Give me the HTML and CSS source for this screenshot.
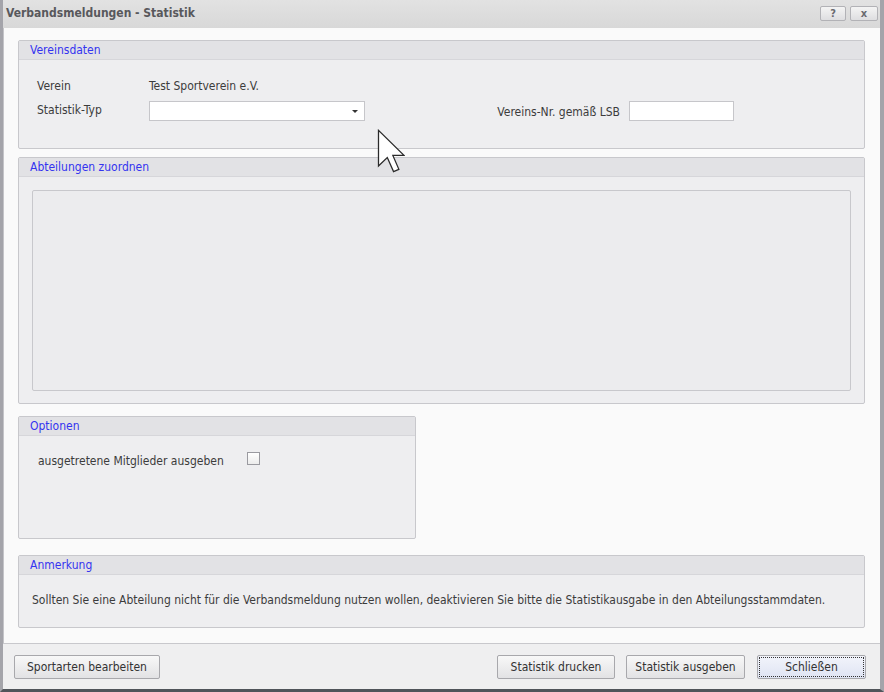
FILE: index.html
```html
<!DOCTYPE html>
<html lang="de">
  <head>
    <meta charset="UTF-8" />
    <title>Verbandsmeldungen - Statistik</title>
    <link rel="stylesheet" href="styles.css">
  </head>
  <body>
    <div class="window">
      <div class="titlebar">
        <span class="title">Verbandsmeldungen - Statistik</span>
        <div class="title-buttons">
          <span class="tbtn">?</span>
          <span class="tbtn tbtn-close">x</span>
        </div>
      </div>

      <div class="content">
        <div class="group group-verein">
          <div class="group-head">Vereinsdaten</div>
          <div class="group-body">
            <div class="row">
              <span class="lbl">Verein</span>
              <span>Test Sportverein e.V.</span>
            </div>
            <div class="row row-typ">
              <span class="lbl">Statistik-Typ</span>
              <div class="combo"><span class="caret"></span></div>
              <div class="lsb">
                <span class="lsb-lbl">Vereins-Nr. gemäß LSB</span>
                <div class="textbox"></div>
              </div>
            </div>
          </div>
        </div>

        <div class="group group-abt">
          <div class="group-head">Abteilungen zuordnen</div>
          <div class="group-body">
            <div class="listbox"></div>
          </div>
        </div>

        <div class="group group-opt">
          <div class="group-head">Optionen</div>
          <div class="group-body">
            <div class="row">
              <span class="lbl-opt">ausgetretene Mitglieder ausgeben</span>
              <span class="checkbox"></span>
            </div>
          </div>
        </div>

        <div class="group group-note">
          <div class="group-head">Anmerkung</div>
          <div class="group-body">
            Sollten Sie eine Abteilung nicht für die Verbandsmeldung nutzen wollen, deaktivieren Sie bitte die Statistikausgabe in den Abteilungsstammdaten.
          </div>
        </div>
      </div>

      <div class="footer">
        <button class="btn btn-sport">Sportarten bearbeiten</button>
        <div class="footer-right">
          <button class="btn btn-druck">Statistik drucken</button>
          <button class="btn btn-ausgabe">Statistik ausgeben</button>
          <button class="btn btn-close">Schließen</button>
        </div>
      </div>
    </div>

    <svg class="cursor" width="28" height="44" viewBox="0 0 12 19">
      <path d="M0.6 0.6 V16 L4.4 12.3 L7.1 18.4 L9.4 17.4 L6.8 11.4 H11.6 Z" fill="#fff" stroke="#2a2a2a" stroke-width="0.55" stroke-linejoin="miter" />
    </svg>
  </body>
</html>
```

FILE: styles.css
```css
body {
  margin: 0;
  width: 884px;
  height: 692px;
  overflow: hidden;
  font-family: "DejaVu Sans Condensed", "Liberation Sans", sans-serif;
  font-size: 12px;
  color: #3c3c3c;
  background: #4a4a4a;
}
.window {
  height: 689px;
  display: flex;
  flex-direction: column;
  background: #dcdcde;
  border-left: 3px solid #a4a4aa;
  border-right: 4px solid #a4a4aa;
  border-bottom: 3px solid #50545a;
}
.titlebar {
  height: 28px;
  display: flex;
  align-items: center;
  justify-content: space-between;
  background: linear-gradient(#e2e2e2, #d8d8d8);
  padding: 0 2px 0 3px;
  box-sizing: border-box;
}
.title {
  font-weight: bold;
  font-size: 12px;
  color: #58585c;
  margin-top: -2px;
}
.title-buttons {
  display: flex;
  gap: 4px;
  margin-top: -1px;
}
.tbtn {
  width: 24px;
  height: 13px;
  border: 1px solid #b2b2b6;
  border-radius: 2px;
  background: linear-gradient(#f4f4f4, #dedee0);
  color: #6a6a70;
  font-weight: bold;
  font-size: 11px;
  line-height: 13px;
  text-align: center;
}
.tbtn-close {
  width: 26px;
}
.content {
  flex: 1;
  background: #fafafa;
  padding: 12px 15px 0 14px;
  border-left: 1px solid #c4c4c8;
}
.group {
  border: 1px solid #c8c8cc;
  border-radius: 2px;
  background: #eeeef0;
  box-sizing: border-box;
}
.group-head {
  height: 18px;
  line-height: 18px;
  padding-left: 11px;
  background: #e2e2e5;
  border-bottom: 1px solid #d6d6da;
  color: #3434f0;
  font-size: 12px;
}
.group-verein {
  height: 109px;
}
.group-verein .group-body {
  padding: 18px 0 0 18px;
}
.row {
  display: flex;
  align-items: center;
  height: 16px;
}
.lbl {
  width: 112px;
}
.row-typ {
  margin-top: 7px;
  height: 20px;
  align-items: flex-start;
}
.row-typ .lbl {
  line-height: 16px;
  padding-top: 1px;
}
.combo {
  width: 214px;
  height: 18px;
  background: #fff;
  border: 1px solid #c6c6ca;
  position: relative;
}
.caret {
  position: absolute;
  right: 6px;
  top: 8px;
  border-left: 3px solid transparent;
  border-right: 3px solid transparent;
  border-top: 3px solid #333;
}
.lsb {
  display: flex;
  align-items: flex-start;
  gap: 9px;
  margin-left: auto;
  margin-right: 130px;
}
.lsb-lbl {
  padding-top: 4px;
}
.textbox {
  width: 103px;
  height: 18px;
  background: #fff;
  border: 1px solid #c6c6ca;
}
.group-abt {
  margin-top: 8px;
  height: 247px;
}
.group-abt .group-body {
  padding: 13px 13px 0 13px;
}
.listbox {
  height: 199px;
  border: 1px solid #c8c8cc;
  border-radius: 2px;
  background: #ececee;
}
.group-opt {
  margin-top: 12px;
  width: 398px;
  height: 123px;
}
.group-opt .group-body {
  padding: 17px 0 0 19px;
}
.lbl-opt {
  width: 209px;
}
.checkbox {
  width: 11px;
  height: 11px;
  border: 1px solid #9a9aa0;
  background: linear-gradient(#fff, #ececec);
  margin-top: -6px;
}
.group-note {
  margin-top: 16px;
  height: 73px;
}
.group-note .group-body {
  padding: 18px 0 0 13px;
}
.footer {
  height: 45px;
  border-top: 1px solid #c8c8cc;
  background: #efeff0;
  display: flex;
  align-items: center;
  justify-content: space-between;
  padding: 0 14px 0 11px;
}
.footer-right {
  display: flex;
  gap: 11px;
}
.btn {
  height: 24px;
  border: 1px solid #a8a8ac;
  border-radius: 2px;
  background: linear-gradient(#f8f8f8, #e2e2e4);
  font-family: inherit;
  font-size: 12px;
  color: #333;
  padding: 0;
}
.btn-sport {
  width: 146px;
}
.btn-druck {
  width: 118px;
}
.btn-ausgabe {
  width: 119px;
}
.btn-close {
  width: 109px;
  margin-left: 1px;
  background: linear-gradient(#f2f4fb, #dfe4f3);
  outline: 1px dotted #333;
  outline-offset: -3px;
}
.cursor {
  position: absolute;
  left: 377px;
  top: 129px;
}
```
